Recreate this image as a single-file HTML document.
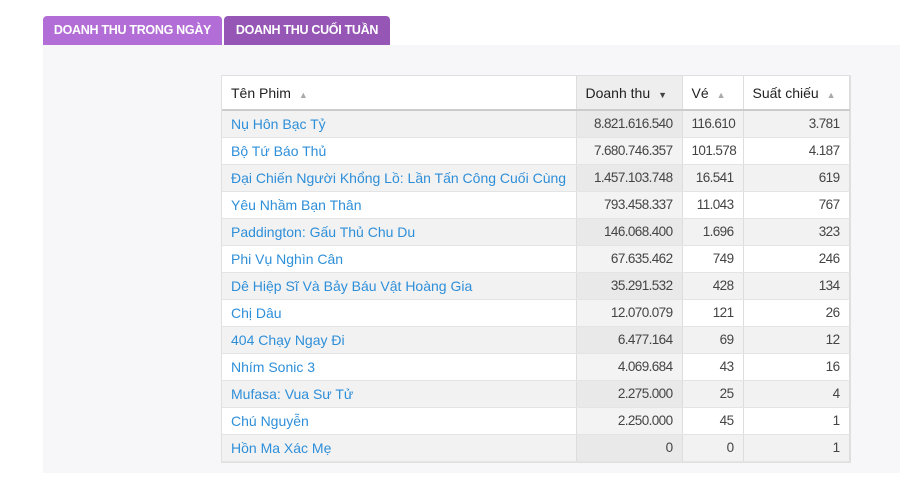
<!DOCTYPE html>
<html><head><meta charset="utf-8"><style>
*{margin:0;padding:0;box-sizing:border-box}
body{width:900px;height:478px;background:#fff;font-family:"Liberation Sans","DejaVu Sans",sans-serif;position:relative;overflow:hidden}
.tab{position:absolute;top:16px;height:29px;color:#fff;font-weight:bold;font-size:12.5px;line-height:29px;text-align:center;border-radius:4px 4px 0 0;letter-spacing:-0.3px}
.t1{left:43px;width:179px;background:#b26ed6}
.t2{left:224px;width:166px;background:#9656b6}
.panel{position:absolute;left:43px;top:45px;width:857px;height:428px;background:#f7f6f9}
table{position:absolute;left:222px;top:76px;border-collapse:collapse;background:#fff;font-size:14px;color:#333;box-shadow:0 0 0 1px #e0e0e0;table-layout:fixed;width:627px}
th{height:34px;text-align:left;font-weight:normal;padding-left:9px;color:#222;border-right:1px solid #ddd;border-bottom:2px solid #ccc;font-size:14px}
th .a{color:#aaa;font-size:9px;margin-left:8px}
th .d{color:#444;font-size:9px;margin-left:8px}
th.s{background:#eee}
td{height:27px;border-right:1px solid #ddd;border-bottom:1px solid #e4e4e4;padding:0 9px;white-space:nowrap}
td.n{text-align:right;font-size:13.5px;letter-spacing:-0.6px;color:#444;padding-right:9px}
td.f{color:#2e8fd9;letter-spacing:0px}
tr.o td{background:#f2f2f2}
tr td.s{background:#f3f3f3}
tr.o td.s{background:#e9e9e9}
</style></head><body>
<div class="tab t1">DOANH THU TRONG NGÀY</div>
<div class="tab t2">DOANH THU CUỐI TUẦN</div>
<div class="panel"></div>
<table>
<colgroup><col style="width:354px"><col style="width:106px"><col style="width:61px"><col style="width:106px"></colgroup>
<tr><th>Tên Phim<span class="a">▲</span></th><th class="s">Doanh thu<span class="d">▼</span></th><th>Vé<span class="a">▲</span></th><th>Suất chiếu<span class="a">▲</span></th></tr>
<tr class="o"><td class="f">Nụ Hôn Bạc Tỷ</td><td class="n s">8.821.616.540</td><td class="n">116.610</td><td class="n">3.781</td></tr>
<tr><td class="f">Bộ Tứ Báo Thủ</td><td class="n s">7.680.746.357</td><td class="n">101.578</td><td class="n">4.187</td></tr>
<tr class="o"><td class="f">Đại Chiến Người Khổng Lồ: Lần Tấn Công Cuối Cùng</td><td class="n s">1.457.103.748</td><td class="n">16.541</td><td class="n">619</td></tr>
<tr><td class="f">Yêu Nhầm Bạn Thân</td><td class="n s">793.458.337</td><td class="n">11.043</td><td class="n">767</td></tr>
<tr class="o"><td class="f">Paddington: Gấu Thủ Chu Du</td><td class="n s">146.068.400</td><td class="n">1.696</td><td class="n">323</td></tr>
<tr><td class="f">Phi Vụ Nghìn Cân</td><td class="n s">67.635.462</td><td class="n">749</td><td class="n">246</td></tr>
<tr class="o"><td class="f">Dê Hiệp Sĩ Và Bảy Báu Vật Hoàng Gia</td><td class="n s">35.291.532</td><td class="n">428</td><td class="n">134</td></tr>
<tr><td class="f">Chị Dâu</td><td class="n s">12.070.079</td><td class="n">121</td><td class="n">26</td></tr>
<tr class="o"><td class="f">404 Chạy Ngay Đi</td><td class="n s">6.477.164</td><td class="n">69</td><td class="n">12</td></tr>
<tr><td class="f">Nhím Sonic 3</td><td class="n s">4.069.684</td><td class="n">43</td><td class="n">16</td></tr>
<tr class="o"><td class="f">Mufasa: Vua Sư Tử</td><td class="n s">2.275.000</td><td class="n">25</td><td class="n">4</td></tr>
<tr><td class="f">Chú Nguyễn</td><td class="n s">2.250.000</td><td class="n">45</td><td class="n">1</td></tr>
<tr class="o"><td class="f">Hồn Ma Xác Mẹ</td><td class="n s">0</td><td class="n">0</td><td class="n">1</td></tr>
</table>
</body></html>
